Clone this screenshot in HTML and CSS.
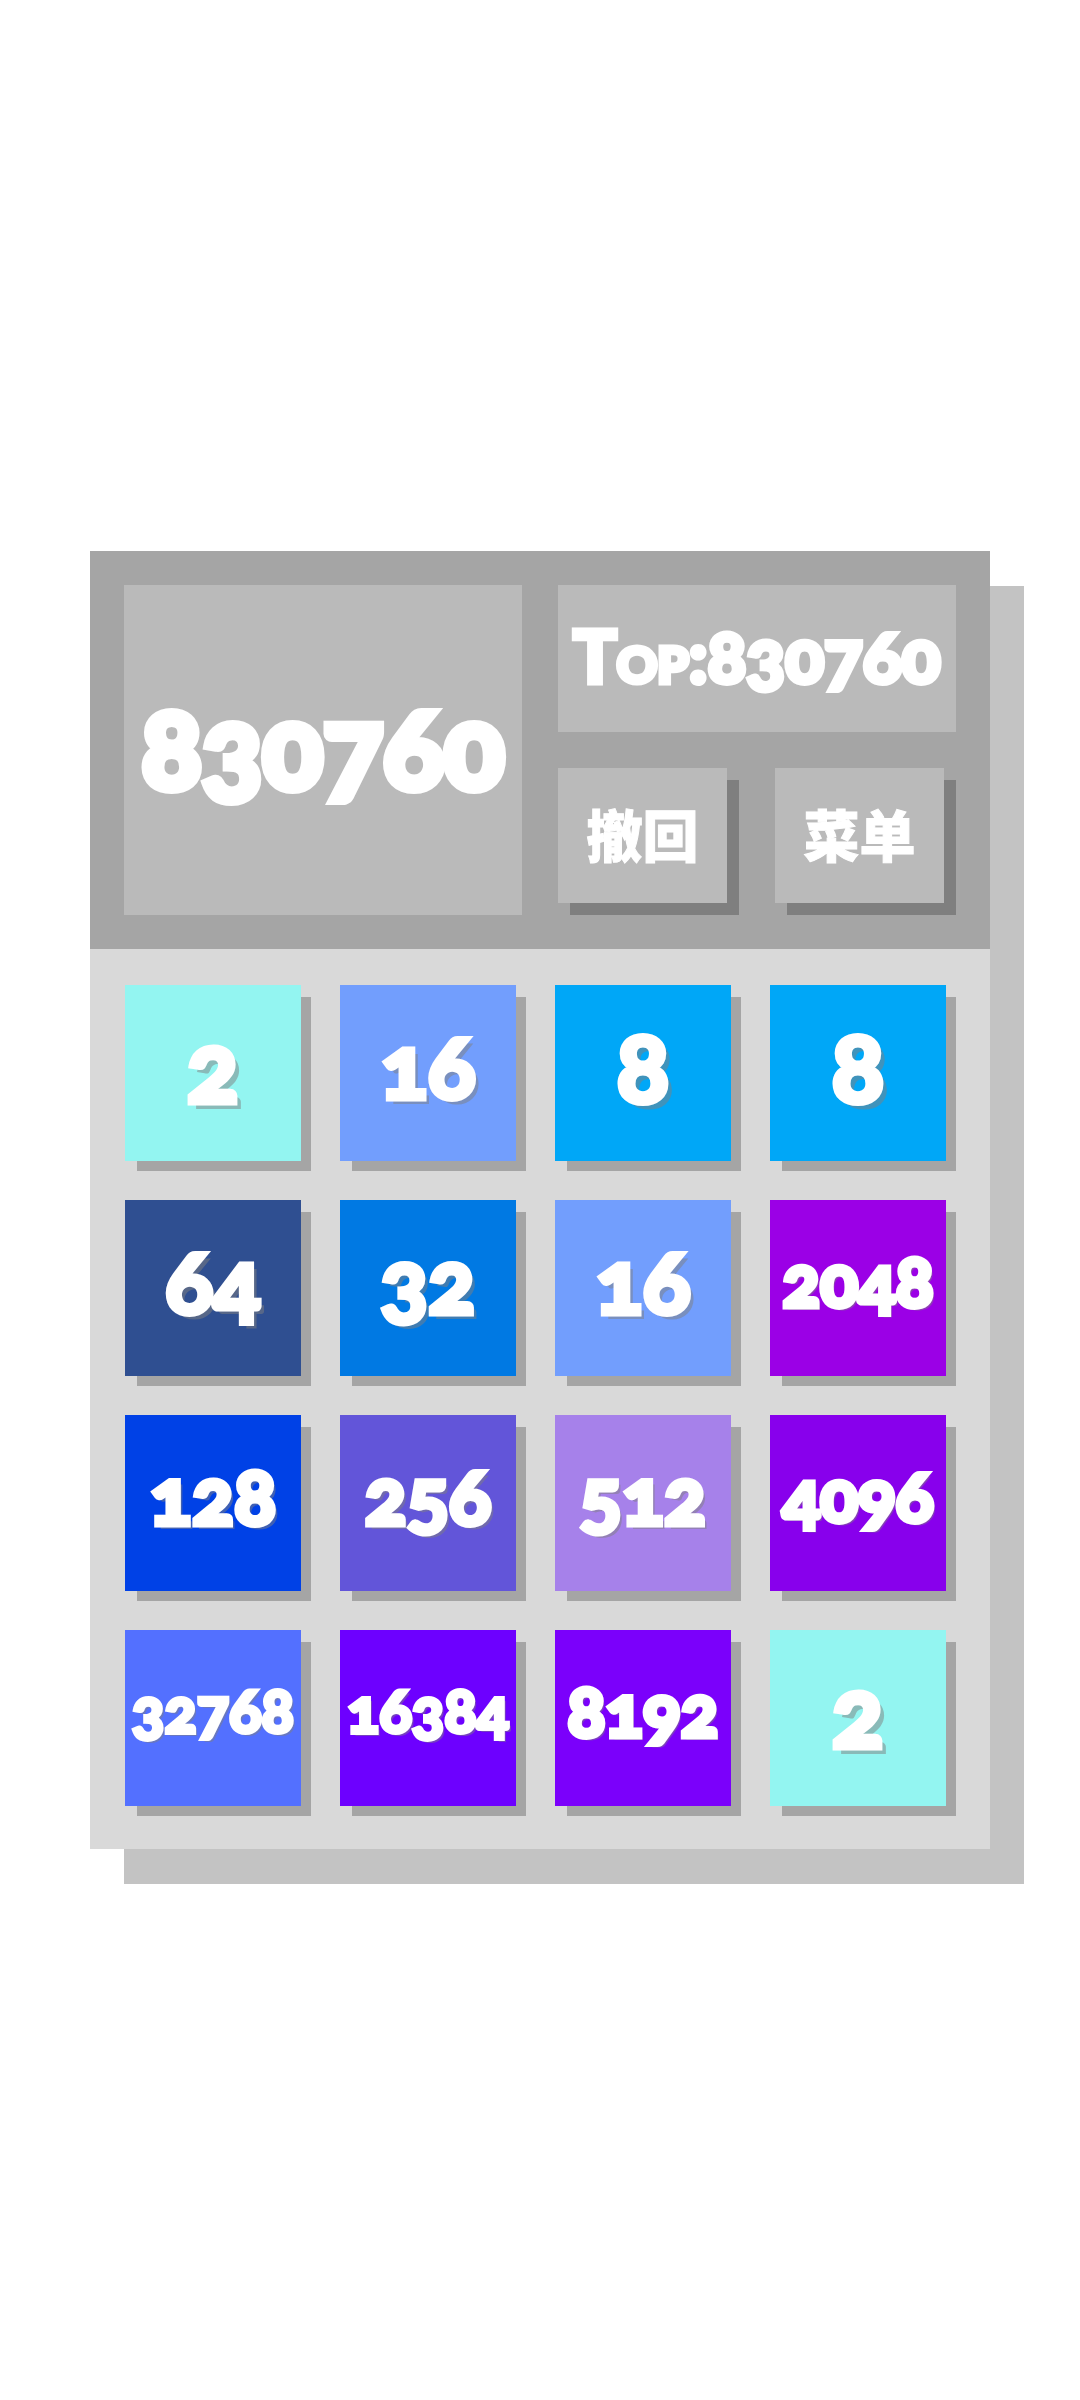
FILE: index.html
```html
<!DOCTYPE html>
<html lang="zh-CN">
<head>
<meta charset="utf-8">
<meta name="viewport" content="width=device-width, initial-scale=1">
<title>2048</title>
<link rel="stylesheet" href="styles.css">
</head>
<body>
<main class="board">
  <header class="panel">
    <div class="score">830760</div>
    <div class="side">
      <div class="top-score">Top:830760</div>
      <div class="actions">
        <button class="action" type="button">撤回</button>
        <button class="action" type="button">菜单</button>
      </div>
    </div>
  </header>
  <section class="grid">
    <div class="tile d1 n2">2</div>
    <div class="tile d2 n16">16</div>
    <div class="tile d1 n8">8</div>
    <div class="tile d1 n8">8</div>
    <div class="tile d2 n64">64</div>
    <div class="tile d2 n32">32</div>
    <div class="tile d2 n16">16</div>
    <div class="tile d4 n2048">2048</div>
    <div class="tile d3 n128">128</div>
    <div class="tile d3 n256">256</div>
    <div class="tile d3 n512">512</div>
    <div class="tile d4 n4096">4096</div>
    <div class="tile d5 n32768">32768</div>
    <div class="tile d5 n16384">16384</div>
    <div class="tile d4 n8192">8192</div>
    <div class="tile d1 n2">2</div>
  </section>
</main>
</body>
</html>
```
FILE: styles.css
```css
* {
  box-sizing: border-box;
}

body {
  margin: 0;
  min-height: 100vh;
  display: flex;
  align-items: center;
  justify-content: center;
  background: #fff;
  color: #fff;
  font-family: Lato, "Noto Sans CJK SC", sans-serif;
  font-weight: 900;
  font-variant-numeric: oldstyle-nums;
  line-height: 1;
}

.board {
  width: calc(100% / 1.2);
  background: #d9d9d9;
  box-shadow: 34px 35px 0 #c3c3c3;
}

.panel {
  display: grid;
  grid-template-columns: 1fr 1fr;
  gap: 36px;
  padding: 34px;
  background: #a5a5a5;
}

.score,
.top-score,
.action {
  display: flex;
  align-items: center;
  justify-content: center;
  background: #bababa;
}

.score {
  padding-bottom: 8px;
  font-size: 112px;
  -webkit-text-stroke: 8px #fff;
}

.side {
  display: grid;
  gap: 36px;
}

.top-score {
  height: 147px;
  padding-bottom: 8px;
  font-size: 72px;
  font-variant-caps: small-caps;
  -webkit-text-stroke: 5px #fff;
}

.actions {
  display: grid;
  grid-template-columns: 1fr 1fr;
  gap: 48px;
  padding: 0 12px 12px 0;
}

.action {
  height: 135px;
  padding: 0;
  border: 0;
  color: inherit;
  font: inherit;
  font-size: 56px;
  -webkit-text-stroke: 1px #fff;
  box-shadow: 12px 12px 0 #7f7f7f;
}

.grid {
  display: grid;
  grid-template-columns: repeat(4, 1fr);
  gap: 39px;
  padding: 36px 44px 43px 35px;
}

.tile {
  display: flex;
  align-items: center;
  justify-content: center;
  aspect-ratio: 1;
  min-width: 0;
  padding-bottom: 16px;
  box-shadow: 11px 11px 0 -1px #a5a5a5;
  -webkit-text-stroke: 5px #fff;
}

.d1 { font-size: 98px; text-shadow: 6px 6px 0 #80808080; }
.d2 { font-size: 88px; text-shadow: 5px 5px 0 #80808080; }
.d3 { font-size: 78px; text-shadow: 4px 4px 0 #80808080; }
.d4 { font-size: 70px; text-shadow: 3px 3px 0 #80808080; }
.d5 { font-size: 60px; text-shadow: 3px 3px 0 #80808080; -webkit-text-stroke-width: 4px; }

.n2 { background: #93f5f1; }
.n8 { background: #00a7f7; }
.n16 { background: #729efd; }
.n32 { background: #0079e3; }
.n64 { background: #2f4f91; }
.n128 { background: #0041e6; }
.n256 { background: #6255d9; }
.n512 { background: #a681ea; }
.n2048 { background: #9b00e6; }
.n4096 { background: #8800ec; }
.n8192 { background: #7b00fb; }
.n16384 { background: #6d00ff; }
.n32768 { background: #5370ff; }
```
